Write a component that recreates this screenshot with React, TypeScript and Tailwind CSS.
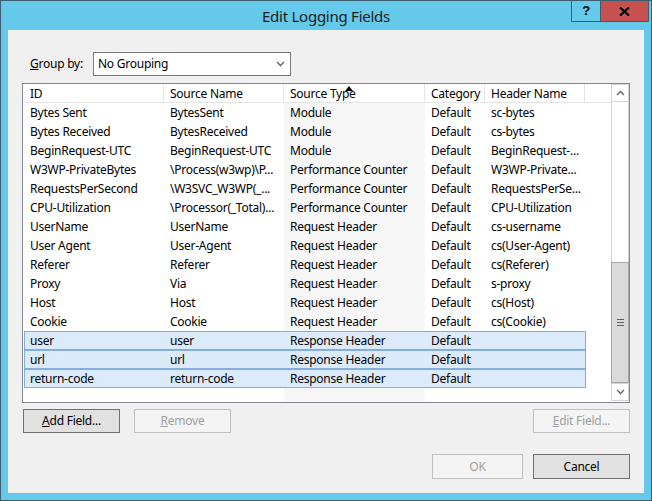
import React from "react";

type Row = [string, string, string, string, string];

const rows: Row[] = [
  ["Bytes Sent", "BytesSent", "Module", "Default", "sc-bytes"],
  ["Bytes Received", "BytesReceived", "Module", "Default", "cs-bytes"],
  ["BeginRequest-UTC", "BeginRequest-UTC", "Module", "Default", "BeginRequest-..."],
  ["W3WP-PrivateBytes", "\\Process(w3wp)\\P...", "Performance Counter", "Default", "W3WP-Private..."],
  ["RequestsPerSecond", "\\W3SVC_W3WP(_...", "Performance Counter", "Default", "RequestsPerSe..."],
  ["CPU-Utilization", "\\Processor(_Total)...", "Performance Counter", "Default", "CPU-Utilization"],
  ["UserName", "UserName", "Request Header", "Default", "cs-username"],
  ["User Agent", "User-Agent", "Request Header", "Default", "cs(User-Agent)"],
  ["Referer", "Referer", "Request Header", "Default", "cs(Referer)"],
  ["Proxy", "Via", "Request Header", "Default", "s-proxy"],
  ["Host", "Host", "Request Header", "Default", "cs(Host)"],
  ["Cookie", "Cookie", "Request Header", "Default", "cs(Cookie)"],
  ["user", "user", "Response Header", "Default", ""],
  ["url", "url", "Response Header", "Default", ""],
  ["return-code", "return-code", "Response Header", "Default", ""],
];

const font = { fontFamily: '"Segoe UI", "Noto Sans", "Open Sans", sans-serif' };

function Chevron({ up }: { up?: boolean }) {
  return (
    <svg width="9" height="6" viewBox="0 0 9 6">
      <path
        d={up ? "M1 5 L4.5 1.5 L8 5" : "M1 1 L4.5 4.5 L8 1"}
        stroke="#606060"
        strokeWidth="1.3"
        fill="none"
      />
    </svg>
  );
}

function DataRow({ r, selected }: { r: Row; selected: boolean }) {
  if (selected) {
    return (
      <div className="flex h-[19px] w-[562px] ml-[1px] bg-[#dcebfc] border border-[#84acdd] box-border leading-[18px] text-black">
        <div className="w-[139px] pl-[5px] whitespace-nowrap overflow-hidden">{r[0]}</div>
        <div className="w-[120px] pl-[6px] whitespace-nowrap overflow-hidden">{r[1]}</div>
        <div className="w-[141px] pl-[6px] whitespace-nowrap overflow-hidden">{r[2]}</div>
        <div className="w-[60px] pl-[6px] whitespace-nowrap overflow-hidden">{r[3]}</div>
        <div className="w-[100px] pl-[6px] whitespace-nowrap overflow-hidden">{r[4]}</div>
      </div>
    );
  }
  return (
    <div className="flex h-[19px] leading-[20px] text-black">
      <div className="w-[141px] pl-[7px] whitespace-nowrap overflow-hidden">{r[0]}</div>
      <div className="w-[120px] pl-[6px] whitespace-nowrap overflow-hidden">{r[1]}</div>
      <div className="w-[141px] pl-[6px] whitespace-nowrap overflow-hidden bg-[#f7f7f7]">{r[2]}</div>
      <div className="w-[60px] pl-[6px] whitespace-nowrap overflow-hidden">{r[3]}</div>
      <div className="w-[100px] pl-[6px] whitespace-nowrap overflow-hidden">{r[4]}</div>
    </div>
  );
}

export default function App() {
  return (
    <div
      className="w-[652px] h-[501px] bg-[#65c9ea] border border-[#3b5e70] box-border flex flex-col tracking-[-0.25px]"
      style={font}
    >
      {/* title bar */}
      <div className="relative h-[29px] shrink-0 flex items-center justify-center">
        <span className="text-[15px] text-[#1b1b1b] mt-[1px]">Edit Logging Fields</span>
        <div className="absolute top-[-1px] right-[2px] flex h-[22px]">
          <div className="w-[29px] h-[22px] border border-[#3b5e70] border-r-0 flex items-center justify-center text-black font-bold text-[13px]" style={{ fontFamily: '"Liberation Sans", Arial, sans-serif' }}>
            ?
          </div>
          <div className="w-[49px] h-[22px] bg-[#c75050] border border-[#3b5e70] flex items-center justify-center">
            <svg width="11" height="9" viewBox="0 0 11 9">
              <path d="M1 0.5 L10 8.5 M10 0.5 L1 8.5" stroke="#000" strokeWidth="2.2" />
            </svg>
          </div>
        </div>
      </div>

      {/* client area */}
      <div className="mx-[7px] h-[463px] bg-[#f0f0f0] flex flex-col text-[12px]">
        {/* group by */}
        <div className="flex items-center mt-[22px] h-[24px]">
          <span className="ml-[22px] w-[63px] text-black">
            <u>G</u>roup by:
          </span>
          <div className="w-[198px] h-[24px] bg-white border border-[#7a7a7a] box-border flex items-center justify-between pl-[4px] pr-[5px] text-black">
            <span>No Grouping</span>
            <Chevron />
          </div>
        </div>

        {/* list view */}
        <div className="ml-[14px] mt-[7px] w-[608px] h-[320px] bg-white border border-[#828790] box-border flex">
          <div className="flex-1 flex flex-col">
            {/* header */}
            <div className="flex h-[19px] border-b border-[#e5e5e5] box-border leading-[19px] text-black">
              <div className="w-[141px] pl-[7px] border-r border-[#e5e5e5]">ID</div>
              <div className="w-[120px] pl-[6px] border-r border-[#e5e5e5]">Source Name</div>
              <div className="relative w-[141px] pl-[6px] border-r border-[#e5e5e5]">
                Source Type
                <svg className="absolute left-[61px] top-[2px]" width="8" height="5" viewBox="0 0 8 5">
                  <path d="M0 5 L4 0 L8 5 Z" fill="#000" />
                </svg>
              </div>
              <div className="w-[60px] pl-[6px] border-r border-[#e5e5e5]">Category</div>
              <div className="w-[100px] pl-[6px] border-r border-[#e5e5e5]">Header Name</div>
              <div className="flex-1" />
            </div>
            {rows.map((r, i) => (
              <DataRow key={i} r={r} selected={i >= 12} />
            ))}
            <div className="flex flex-1">
              <div className="w-[261px]" />
              <div className="w-[141px] bg-[#f7f7f7]" />
            </div>
          </div>

          {/* scrollbar */}
          <div className="w-[18px] flex flex-col mb-[1px]">
            <div className="h-[18px] border border-[#d4d4d4] bg-white flex items-center justify-center">
              <Chevron up />
            </div>
            <div className="flex-1 border-x border-[#d4d4d4] bg-white" />
            <div className="h-[121px] bg-[#dadada] border border-[#a6a6a6] flex flex-col items-center justify-center gap-[2px]">
              <div className="w-[7px] h-[1px] bg-[#606060]" />
              <div className="w-[7px] h-[1px] bg-[#606060]" />
              <div className="w-[7px] h-[1px] bg-[#606060]" />
            </div>
            <div className="h-[18px] border border-[#d4d4d4] bg-white flex items-center justify-center">
              <Chevron />
            </div>
          </div>
        </div>

        {/* list buttons */}
        <div className="flex mt-[6px] h-[24px]">
          <div className="ml-[15px] w-[97px] h-[24px] bg-[#e1e1e1] border border-[#707070] box-border flex items-center justify-center text-black">
            <span>
              <u>A</u>dd Field...
            </span>
          </div>
          <div className="ml-[14px] w-[97px] h-[24px] bg-[#f4f4f4] border border-[#bfbfbf] box-border flex items-center justify-center text-[#a0a0a0]">
            <span>
              <u>R</u>emove
            </span>
          </div>
          <div className="ml-auto mr-[14px] w-[97px] h-[24px] bg-[#f4f4f4] border border-[#bfbfbf] box-border flex items-center justify-center text-[#a0a0a0]">
            <span>
              <u>E</u>dit Field...
            </span>
          </div>
        </div>

        {/* dialog buttons */}
        <div className="flex justify-end mt-[21px] h-[25px] mr-[14px] gap-[10px]">
          <div className="w-[91px] h-[25px] bg-[#f4f4f4] border border-[#bfbfbf] box-border flex items-center justify-center text-[#a0a0a0]">
            OK
          </div>
          <div className="w-[97px] h-[25px] bg-[#e1e1e1] border border-[#707070] box-border flex items-center justify-center text-black">
            Cancel
          </div>
        </div>
      </div>
    </div>
  );
}
